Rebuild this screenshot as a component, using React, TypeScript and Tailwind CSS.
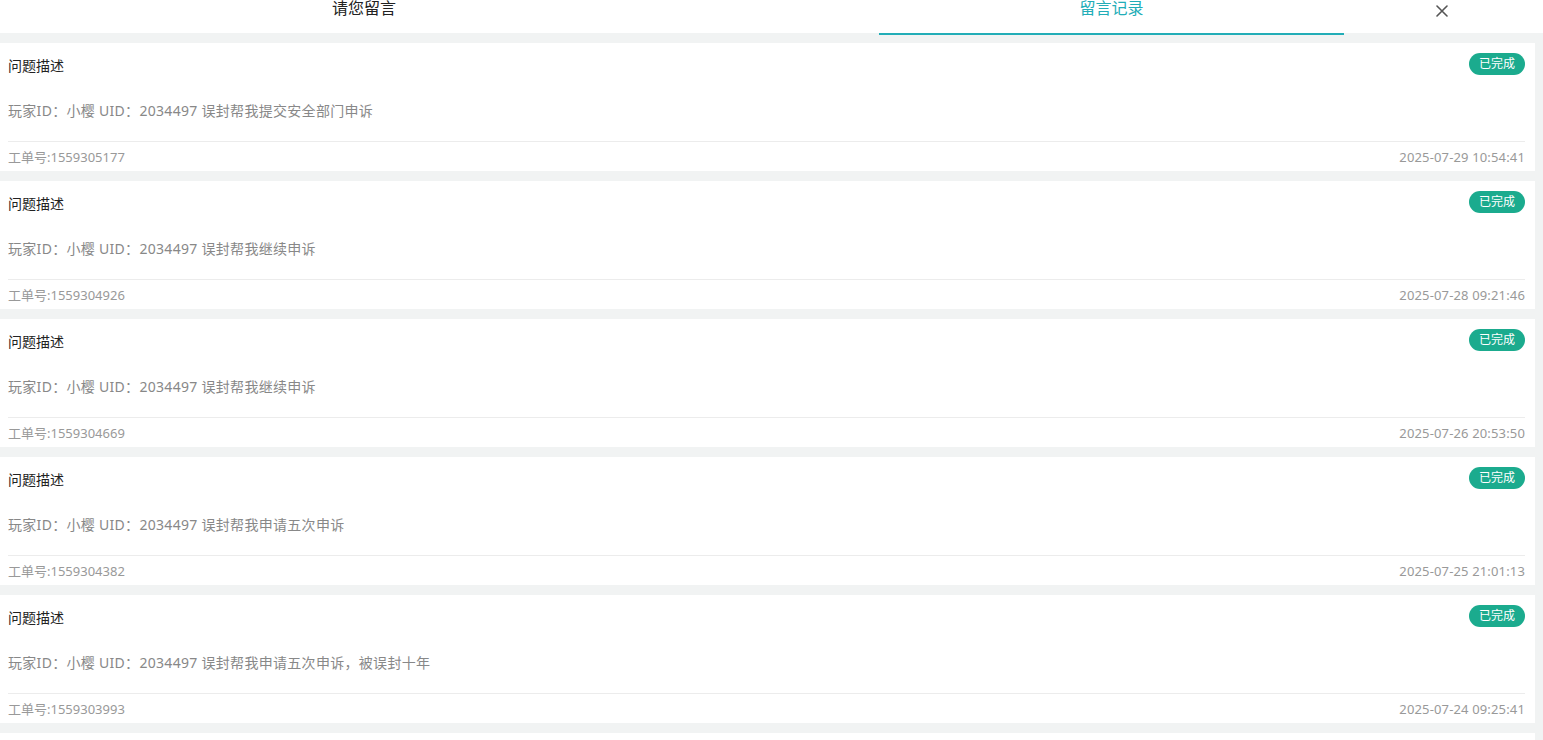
import React from "react";

const items = [
  { text: "玩家ID：小樱 UID：2034497 误封帮我提交安全部门申诉", no: "1559305177", date: "2025-07-29 10:54:41" },
  { text: "玩家ID：小樱 UID：2034497 误封帮我继续申诉", no: "1559304926", date: "2025-07-28 09:21:46" },
  { text: "玩家ID：小樱 UID：2034497 误封帮我继续申诉", no: "1559304669", date: "2025-07-26 20:53:50" },
  { text: "玩家ID：小樱 UID：2034497 误封帮我申请五次申诉", no: "1559304382", date: "2025-07-25 21:01:13" },
  { text: "玩家ID：小樱 UID：2034497 误封帮我申请五次申诉，被误封十年", no: "1559303993", date: "2025-07-24 09:25:41" },
  { text: "玩家ID：小樱 UID：2034497 误封帮我继续申诉", no: "1559303500", date: "2025-07-23 10:11:02" },
];

function Card({ text, no, date }: { text: string; no: string; date: string }) {
  return (
    <div className="bg-white pl-2 pr-[10px] h-[128px] shrink-0">
      <div className="pt-[10px]">
        <div className="flex items-start justify-between h-[22px]">
          <div className="mt-[3px] text-[14px] leading-[20px] text-[#222]">问题描述</div>
          <div className="h-[22px] w-[56px] rounded-full bg-[#1bab8e] text-white text-[12px] leading-[22px] text-center">已完成</div>
        </div>
      </div>
      <div className="mt-[26px] text-[14px] leading-[20px] tracking-[0.3px] text-[#888]">{text}</div>
      <div className="mt-[20px] border-t border-[#ececec]"></div>
      <div className="pt-[5px] flex justify-between text-[13px] leading-[20px] text-[#999]">
        <span>工单号:{no}</span>
        <span className="tracking-[0.15px]">{date}</span>
      </div>
    </div>
  );
}

export default function App() {
  return (
    <div
      className="w-[1543px] h-[740px] overflow-hidden bg-[#f1f3f3]"
      style={{ fontFamily: '"Noto Sans", "Noto Sans CJK SC", sans-serif' }}
    >
      <div className="flex items-start h-[35px]">
        <div className="w-[131px] h-[33px] bg-white"></div>
        <div className="w-[466px] h-[33px] bg-white text-center text-[16px] leading-[17px] text-[#222]">请您留言</div>
        <div className="w-[282px] h-[33px] bg-white"></div>
        <div className="w-[465px] h-[35px] bg-white border-b-2 border-[#22adb7] text-center text-[16px] leading-[17px] text-[#22adb7]">留言记录</div>
        <div className="flex-1 h-[33px] bg-white flex justify-center pt-[5px] pr-[1px]">
          <svg width="12" height="12" viewBox="0 0 12 12" className="ml-[-2px]">
            <path d="M1 1 L11 11 M11 1 L1 11" stroke="#555" strokeWidth="1.6" strokeLinecap="round" />
          </svg>
        </div>
      </div>
      <div className="pt-[8px] pr-[8px] flex flex-col gap-[10px]">
        {items.map((it, i) => (
          <Card key={i} {...it} />
        ))}
      </div>
    </div>
  );
}
